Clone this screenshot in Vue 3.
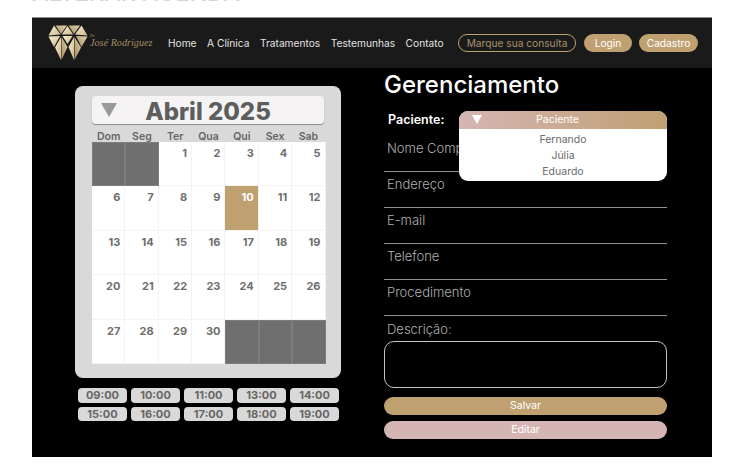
<script setup>
const navLinks = ['Home', 'A Clínica', 'Tratamentos', 'Testemunhas', 'Contato']
const weekDays = ['Dom', 'Seg', 'Ter', 'Qua', 'Qui', 'Sex', 'Sab']
const days = [null, null, 1, 2, 3, 4, 5]
for (let d = 6; d <= 30; d++) days.push(d)
days.push(null, null, null)
const times = ['09:00', '10:00', '11:00', '13:00', '14:00', '15:00', '16:00', '17:00', '18:00', '19:00']
const fields = ['Nome Completo', 'Endereço', 'E-mail', 'Telefone', 'Procedimento']
const patients = ['Fernando', 'Júlia', 'Eduardo']
</script>

<template>
  <div class="page">
    <h1 class="page-title">ALTERAR AGENDA</h1>
    <div class="frame">
      <header class="topbar">
        <div class="logo">
          <svg width="40" height="37" viewBox="0 0 40 37">
            <defs>
              <linearGradient id="gold" x1="0" y1="0" x2="1" y2="1">
                <stop offset="0" stop-color="#f6eed2" />
                <stop offset="1" stop-color="#cdb88a" />
              </linearGradient>
              <linearGradient id="goldDark" x1="1" y1="0" x2="0" y2="1">
                <stop offset="0" stop-color="#e3d5ad" />
                <stop offset="1" stop-color="#a08b5f" />
              </linearGradient>
            </defs>
            <polygon points="6,0.5 12.5,9.5 0.5,10.5" fill="url(#gold)" />
            <polygon points="7.5,0.5 19,0.5 13,9" fill="url(#goldDark)" />
            <polygon points="19.5,1 13.8,9.5 25.2,9.5" fill="url(#gold)" />
            <polygon points="20.5,0.5 32,0.5 26,9" fill="url(#goldDark)" />
            <polygon points="33.5,0.5 39.5,10.5 27,9.5" fill="url(#gold)" />
            <polygon points="0.5,11.5 12,11 6,22" fill="url(#gold)" />
            <polygon points="14.5,11 24.5,11 19.5,19" fill="url(#gold)" />
            <polygon points="39.5,11.5 28,11 33.5,22" fill="url(#goldDark)" />
            <polygon points="13,12 7,22.5 13,35" fill="url(#gold)" />
            <polygon points="13.5,12 19.5,22 13.5,35" fill="url(#goldDark)" />
            <polygon points="26,12 20.5,22 26,35" fill="url(#gold)" />
            <polygon points="26.5,12 33,22.5 26.5,35" fill="url(#goldDark)" />
          </svg>
          <span class="logo-name"><small>Dr.</small>José Rodriguez</span>
        </div>
        <nav class="nav">
          <a v-for="link in navLinks" :key="link">{{ link }}</a>
        </nav>
        <div class="actions">
          <span class="btn-outline">Marque sua consulta</span>
          <span class="btn-gold login">Login</span>
          <span class="btn-gold signup">Cadastro</span>
        </div>
      </header>

      <main class="content">
        <section class="left">
          <div class="calendar">
            <div class="month-bar">
              <span class="tri"></span>
              <span class="month">Abril 2025</span>
            </div>
            <div class="week">
              <span v-for="w in weekDays" :key="w">{{ w }}</span>
            </div>
            <div class="grid">
              <div
                v-for="(d, i) in days"
                :key="i"
                class="cell"
                :class="{ off: d === null, picked: d === 10 }"
              >{{ d }}</div>
            </div>
          </div>
          <div class="times">
            <span v-for="t in times" :key="t" class="time">{{ t }}</span>
          </div>
        </section>

        <section class="right">
          <h2>Gerenciamento</h2>
          <div class="patient-row">
            <label>Paciente:</label>
            <div class="dropdown">
              <div class="dropdown-head">
                <span class="tri-white"></span>
                <span>Paciente</span>
              </div>
              <div class="dropdown-list">
                <span v-for="p in patients" :key="p">{{ p }}</span>
              </div>
            </div>
          </div>
          <div v-for="f in fields" :key="f" class="field">{{ f }}</div>
          <div class="desc-label">Descrição:</div>
          <div class="textarea"></div>
          <button class="wide salvar">Salvar</button>
          <button class="wide editar">Editar</button>
        </section>
      </main>
    </div>
  </div>
</template>

<style>
html, body {
  margin: 0;
  background: #fff;
  overflow: hidden;
}
</style>

<style scoped>
.page {
  width: 736px;
  height: 466px;
  overflow: hidden;
  font-family: Inter, "Liberation Sans", sans-serif;
  padding: 0 24px 0 32px;
  box-sizing: border-box;
}

.page-title {
  margin: -17px 0 0;
  height: 34px;
  font-size: 23.4px;
  line-height: 20px;
  font-weight: 500;
  white-space: nowrap;
  color: #d4d4d4;
}

.frame {
  width: 680px;
  height: 440px;
  background: #000;
}

.topbar {
  height: 51px;
  box-sizing: border-box;
  border-top: 1px solid #8a8a8a;
  background: #1a1a1a;
  display: flex;
  align-items: center;
  padding: 0 14px 0 16px;
}

.logo {
  display: flex;
  align-items: center;
  width: 120px;
  flex-shrink: 0;
}

.logo-name {
  position: relative;
  top: -1px;
  margin-left: 2px;
  font-family: "Liberation Serif", serif;
  font-style: italic;
  font-size: 10.2px;
  white-space: nowrap;
  color: #a48c60;
}

.logo-name small {
  position: absolute;
  left: 0;
  top: -4px;
  font-size: 4px;
}

.nav {
  display: flex;
  gap: 10.5px;
  font-size: 10.2px;
  color: #e2e2e2;
  white-space: nowrap;
}

.actions {
  margin-left: auto;
  display: flex;
  gap: 8px;
  font-size: 10.2px;
}

.btn-outline {
  width: 118px;
  height: 18px;
  box-sizing: border-box;
  border: 1px solid #bfa071;
  border-radius: 9px;
  color: #a8916a;
  display: flex;
  align-items: center;
  justify-content: center;
  white-space: nowrap;
}

.btn-gold {
  height: 18px;
  border-radius: 9px;
  background: #bfa071;
  color: #fff;
  display: flex;
  align-items: center;
  justify-content: center;
}

.login {
  width: 48px;
}

.signup {
  width: 59px;
  margin-left: -1px;
}

.content {
  display: flex;
  height: 389px;
}

.left {
  width: 352px;
  padding: 18px 0 0 43px;
  box-sizing: border-box;
}

.calendar {
  width: 266px;
  height: 292px;
  box-sizing: border-box;
  background: #d9d9d9;
  border-radius: 8px;
  padding: 10px 17px 0;
}

.month-bar {
  height: 28px;
  border-radius: 4px;
  background: #f5f3f3;
  box-shadow: 0 1px 1px rgba(0, 0, 0, 0.35);
  display: flex;
  align-items: center;
  position: relative;
  justify-content: center;
}

.tri {
  position: absolute;
  left: 9px;
  top: 7px;
  width: 0;
  height: 0;
  border-left: 8px solid transparent;
  border-right: 8px solid transparent;
  border-top: 14px solid #999;
}

.month {
  font-size: 24px;
  font-weight: 800;
  color: #5e5e5e;
  padding-top: 2px;
}

.week {
  display: grid;
  grid-template-columns: repeat(7, 1fr);
  width: 233px;
  height: 18px;
  align-items: end;
  font-size: 10.5px;
  font-weight: 600;
  line-height: 11px;
  color: #666;
  text-align: center;
}

.grid {
  display: grid;
  grid-template-columns: repeat(7, 1fr);
  grid-auto-rows: 44.4px;
  width: 233.5px;
  background: #fff;
}

.cell {
  box-sizing: border-box;
  border-right: 1px solid #f8f1f1;
  border-bottom: 1px solid #f8f1f1;
  padding: 5px 4px 0 0;
  text-align: right;
  font-size: 11px;
  line-height: 13px;
  font-weight: 700;
  color: #6e6e6e;
}

.cell.off {
  background: #6f6f6f;
  border: 1px solid #7d7d7d;
}

.cell.picked {
  background: #bfa071;
  color: #fff;
}

.times {
  display: grid;
  grid-template-columns: repeat(5, 49px);
  gap: 4px 4px;
  margin: 10px 0 0 3px;
  width: 261px;
}

.time {
  height: 14.5px;
  border-radius: 4px;
  background: #d9d9d9;
  font-size: 11px;
  line-height: 14.5px;
  font-weight: 700;
  color: #666;
  text-align: center;
}

.right {
  width: 283px;
}

h2 {
  margin: 2px 0 0;
  height: 36px;
  font-size: 24px;
  line-height: 30px;
  font-weight: 500;
  color: #fff;
}

.patient-row {
  height: 30px;
  box-sizing: border-box;
  position: relative;
  padding: 6px 0 0 4px;
}

.patient-row label {
  display: block;
  font-size: 12.5px;
  line-height: 15px;
  font-weight: 600;
  color: #fff;
}

.dropdown {
  position: absolute;
  z-index: 2;
  left: 75px;
  top: 5px;
  width: 208px;
  height: 70px;
  border-radius: 9px;
  background: #fff;
  overflow: hidden;
  font-size: 10.5px;
  text-align: center;
}

.dropdown-head {
  height: 17.5px;
  background: linear-gradient(90deg, #d5b5b3, #bfa071);
  color: #fff;
  display: flex;
  align-items: center;
  justify-content: center;
  position: relative;
  padding-right: 11px;
}

.tri-white {
  position: absolute;
  left: 13px;
  top: 4px;
  width: 0;
  height: 0;
  border-left: 5px solid transparent;
  border-right: 5px solid transparent;
  border-top: 9px solid #fff;
}

.dropdown-list {
  display: flex;
  flex-direction: column;
  padding-top: 3px;
  line-height: 16px;
  color: #6a6a6a;
}

.field {
  height: 36px;
  box-sizing: border-box;
  border-bottom: 1px solid #8f8f8f;
  padding: 3px 0 0 3px;
  font-size: 13px;
  line-height: 18px;
  font-weight: 300;
  color: #b0b0b0;
}

.desc-label {
  height: 25px;
  padding: 4px 0 0 3px;
  box-sizing: border-box;
  font-size: 13px;
  line-height: 18px;
  font-weight: 300;
  color: #b0b0b0;
}

.textarea {
  height: 47px;
  box-sizing: border-box;
  border: 1px solid #c4c4c4;
  border-radius: 10px;
  margin-bottom: 9px;
}

.wide {
  display: block;
  width: 100%;
  height: 18px;
  padding: 0;
  border: 0;
  border-radius: 9px;
  color: #fff;
  font: inherit;
  font-size: 10.5px;
  line-height: 18px;
  text-align: center;
}

.salvar {
  background: #bfa071;
  margin-bottom: 6px;
}

.editar {
  background: #d5b5b3;
}
</style>
